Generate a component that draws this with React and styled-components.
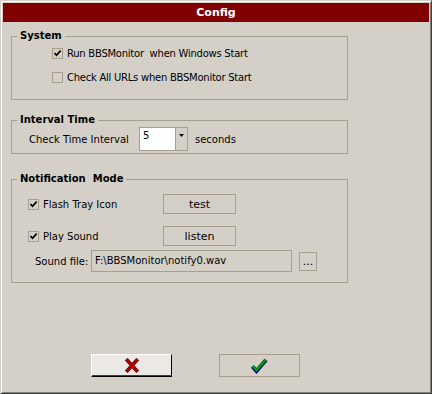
import React from 'react';
import styled, { createGlobalStyle } from 'styled-components';

const GlobalStyle = createGlobalStyle`
  html, body {
    margin: 0;
    padding: 0;
    background: #d4d0c8;
  }
  body {
    font-family: "DejaVu Sans", Verdana, sans-serif;
    font-size: 10px;
    color: #000;
  }
`;

const Window = styled.div`
  box-sizing: border-box;
  width: 432px;
  height: 394px;
  display: flex;
  flex-direction: column;
  padding: 2px;
  background: #d4d0c8;
  border: 1px solid;
  border-color: #d4d0c8 #404040 #404040 #d4d0c8;
  box-shadow: inset 1px 1px #fff, inset -1px -1px #808080;
`;

const TitleBar = styled.div`
  height: 19px;
  background: #800000;
  color: #fff;
  font-weight: bold;
  font-size: 11px;
  line-height: 19px;
  text-align: center;
`;

const Group = styled.fieldset`
  box-sizing: border-box;
  width: 337px;
  min-width: 0;
  margin: ${(p) => p.$top}px 0 0 8px;
  padding: ${(p) => p.$pad};
  border: 1px solid #a79f8e;
  display: flex;
  flex-direction: column;
`;

const Legend = styled.legend`
  margin-left: 5px;
  padding: 0 3px;
  font-weight: bold;
  font-size: 10px;
  line-height: 14px;
`;

const Row = styled.div`
  display: flex;
  align-items: center;
  height: ${(p) => p.$h || 18}px;
  margin-top: ${(p) => p.$gap || 0}px;
  padding-left: ${(p) => p.$indent || 0}px;
`;

const CheckLabel = styled.label`
  display: flex;
  align-items: center;
  gap: 4px;
  width: ${(p) => (p.$w ? `${p.$w}px` : 'auto')};
  letter-spacing: ${(p) => (p.$tight ? '-0.25px' : 'normal')};
`;

const Box = styled.span`
  box-sizing: border-box;
  width: 11px;
  height: 11px;
  border: 1px solid #a79f8e;
  background: #d4d0c8;
  display: inline-flex;
  align-items: center;
  justify-content: center;
`;

const Check = ({ on }) => (
  <Box>
    {on && (
      <svg width="9" height="9" viewBox="0 0 9 9">
        <path d="M1.5 4 L3.5 6.2 L7.6 1.6" fill="none" stroke="#000" strokeWidth="1.7" />
      </svg>
    )}
  </Box>
);

const Text = styled.span`
  width: ${(p) => (p.$w ? `${p.$w}px` : 'auto')};
  flex: none;
`;

const Combo = styled.div`
  box-sizing: border-box;
  width: 49px;
  height: 24px;
  display: flex;
  border: 1px solid #a79f8e;
  margin-right: 7px;
`;

const ComboValue = styled.div`
  flex: 1;
  background: #fff;
  padding: 2px 3px;
  line-height: 12px;
`;

const ComboArrow = styled.div`
  width: 12px;
  border-left: 1px solid #a79f8e;
  background: #d4d0c8;
  display: flex;
  justify-content: center;
  padding-top: 6px;
  box-sizing: border-box;
`;

const SmallButton = styled.button`
  box-sizing: border-box;
  width: ${(p) => p.$w}px;
  height: ${(p) => p.$h}px;
  margin: 0;
  padding: 0;
  border: 1px solid #a79f8e;
  background: #d4d0c8;
  font-family: inherit;
  font-size: 11px;
  color: #000;
`;

const PathField = styled.div`
  box-sizing: border-box;
  width: 201px;
  height: 22px;
  border: 1px solid #a79f8e;
  padding: 0 3px;
  line-height: 20px;
  font-size: 10px;
  margin-right: 7px;
`;

const Footer = styled.div`
  margin-top: auto;
  display: flex;
  gap: 47px;
  padding: 0 0 14px 88px;
`;

const DialogButton = styled.button`
  box-sizing: border-box;
  width: 81px;
  height: 23px;
  margin: 0;
  padding: 0;
  display: flex;
  align-items: center;
  justify-content: center;
  border: 1px solid;
  border-color: ${(p) => (p.$raised ? '#fff #000 #000 #fff' : '#a79f8e')};
  box-shadow: ${(p) => (p.$raised ? 'inset 0 -1px #404040' : 'none')};
  background: ${(p) => (p.$raised ? '#ebe9e3' : '#d4d0c8')};
`;

const CrossIcon = () => (
  <svg width="14" height="15" viewBox="0 0 14 15">
    <path d="M2.5 2.5 L11.5 12.5 M11.5 2.5 L2.5 12.5" stroke="#5a0000" strokeWidth="3.6" strokeLinecap="square" />
    <path d="M2.5 2.5 L11.5 12.5 M11.5 2.5 L2.5 12.5" stroke="#b00000" strokeWidth="2.4" strokeLinecap="square" />
  </svg>
);

const CheckIcon = () => (
  <svg width="17" height="17" viewBox="0 0 17 17">
    <path d="M1.5 9.5 L5.5 14 L15 3" fill="none" stroke="#00007a" strokeWidth="4" strokeLinejoin="miter" />
    <path d="M1.5 9 L5.5 13.2 L14.5 3" fill="none" stroke="#00a000" strokeWidth="2.4" />
  </svg>
);

export default function App() {
  return (
    <>
      <GlobalStyle />
      <Window>
        <TitleBar>Config</TitleBar>

        <Group $top={7} $pad="0 0 13px 0">
          <Legend>System</Legend>
          <Row $indent={40} $gap={1}>
            <CheckLabel $tight>
              <Check on />
              <span>Run BBSMonitor&nbsp; when Windows Start</span>
            </CheckLabel>
          </Row>
          <Row $indent={40} $gap={6}>
            <CheckLabel $tight>
              <Check />
              <span>Check All URLs when BBSMonitor Start</span>
            </CheckLabel>
          </Row>
        </Group>

        <Group $top={13} $pad="0 0 2px 0">
          <Legend>Interval Time</Legend>
          <Row $indent={17} $h={24}>
            <Text $w={110}>Check Time Interval</Text>
            <Combo>
              <ComboValue>5</ComboValue>
              <ComboArrow>
                <svg width="5" height="3" viewBox="0 0 5 3">
                  <path d="M0 0 H5 L2.5 3 Z" fill="#000" />
                </svg>
              </ComboArrow>
            </Combo>
            <Text>seconds</Text>
          </Row>
        </Group>

        <Group $top={18} $pad="8px 0 10px 0">
          <Legend>Notification&nbsp; Mode</Legend>
          <Row $indent={16} $h={20}>
            <CheckLabel $w={135}>
              <Check on />
              <span>Flash Tray Icon</span>
            </CheckLabel>
            <SmallButton $w={73} $h={20}>test</SmallButton>
          </Row>
          <Row $indent={16} $h={20} $gap={12}>
            <CheckLabel $w={135}>
              <Check on />
              <span>Play Sound</span>
            </CheckLabel>
            <SmallButton $w={73} $h={20}>listen</SmallButton>
          </Row>
          <Row $indent={23} $h={22} $gap={4}>
            <Text $w={56}>Sound file:</Text>
            <PathField>F:\BBSMonitor\notify0.wav</PathField>
            <SmallButton $w={18} $h={19}>...</SmallButton>
          </Row>
        </Group>

        <Footer>
          <DialogButton $raised aria-label="cancel">
            <CrossIcon />
          </DialogButton>
          <DialogButton aria-label="ok">
            <CheckIcon />
          </DialogButton>
        </Footer>
      </Window>
    </>
  );
}
